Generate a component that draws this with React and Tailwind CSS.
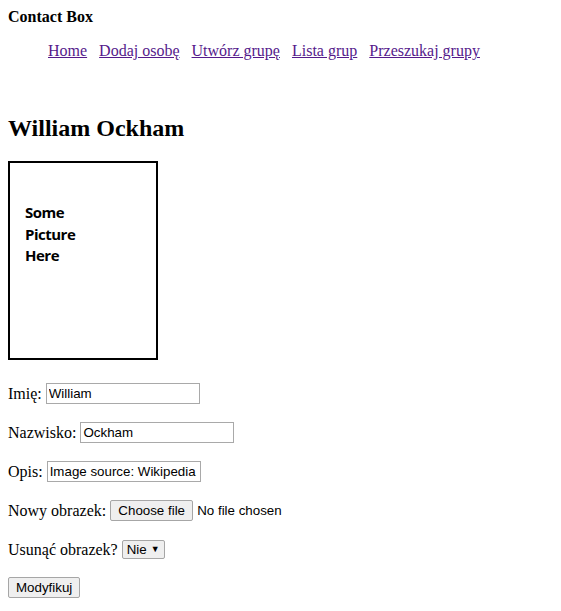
import React from "react";

// one form row: label + control
function Row({ label, children }) {
  return (
    <div className="flex items-center h-[23px] mb-[16px] gap-[4px]">
      <span>{label}</span>
      {children}
    </div>
  );
}

export default function App() {
  const links = ["Home", "Dodaj osobę", "Utwórz grupę", "Lista grup", "Przeszukaj grupy"];
  const inputCls =
    "h-[21px] border border-[#a9a9a9] bg-white px-[2px] text-[13.33px] text-black outline-none font-['Liberation_Sans',Arial,sans-serif]";
  const btnCls =
    "h-[21px] px-[7px] border border-[#a6a6a6] rounded-[2px] bg-[#efefef] text-[13.33px] text-black font-['Liberation_Sans',Arial,sans-serif] leading-none";

  return (
    <div className="bg-white min-h-[611px] px-[8px] pt-[8px] text-[16px] text-black font-['Liberation_Serif','Times_New_Roman',serif]">
      {/* HEADER */}
      <div className="font-bold leading-[18px]">Contact Box</div>
      <ul className="flex gap-[12px] pl-[40px] mt-[16px] leading-[18px]">
        {links.map((l) => (
          <li key={l}>
            <a href="#" className="underline text-[#551a8b]">
              {l}
            </a>
          </li>
        ))}
      </ul>

      {/* PERSON */}
      <h2 className="mt-[55px] text-[24px] font-bold leading-[27px]">William Ockham</h2>
      <div className="mt-[19px] w-[150px] h-[199px] border-2 border-black pt-[39px] pl-[15px]">
        <div className="font-['Open_Sans',sans-serif] font-bold text-[15px] leading-[21.5px] tracking-[-0.5px]">
          Some
          <br />
          Picture
          <br />
          Here
        </div>
      </div>

      {/* FORM */}
      <form className="mt-[22px]" onSubmit={(e) => e.preventDefault()}>
        <Row label="Imię:">
          <input className={inputCls + " w-[154px]"} defaultValue="William" />
        </Row>
        <Row label="Nazwisko:">
          <input className={inputCls + " w-[154px]"} defaultValue="Ockham" />
        </Row>
        <Row label="Opis:">
          <input className={inputCls + " w-[154px]"} defaultValue="Image source: Wikipedia" />
        </Row>
        <Row label="Nowy obrazek:">
          <div className="flex items-center gap-[4px] font-['Liberation_Sans',Arial,sans-serif] text-[13.33px]">
            <button type="button" className={btnCls + " w-[83px]"}>
              Choose file
            </button>
            <span>No file chosen</span>
          </div>
        </Row>
        <Row label="Usunąć obrazek?">
          <div className="h-[19px] w-[43px] border border-[#a6a6a6] rounded-[2px] bg-[#efefef] flex items-center pl-[4px] gap-[4px] text-[13.33px] font-['Liberation_Sans',Arial,sans-serif]">
            <span>Nie</span>
            <span className="text-[9px]">▼</span>
          </div>
        </Row>
        <div className="flex items-center h-[23px] -mt-[1px]">
          <button type="submit" className={btnCls + " w-[72px]"}>
            Modyfikuj
          </button>
        </div>
      </form>
    </div>
  );
}
